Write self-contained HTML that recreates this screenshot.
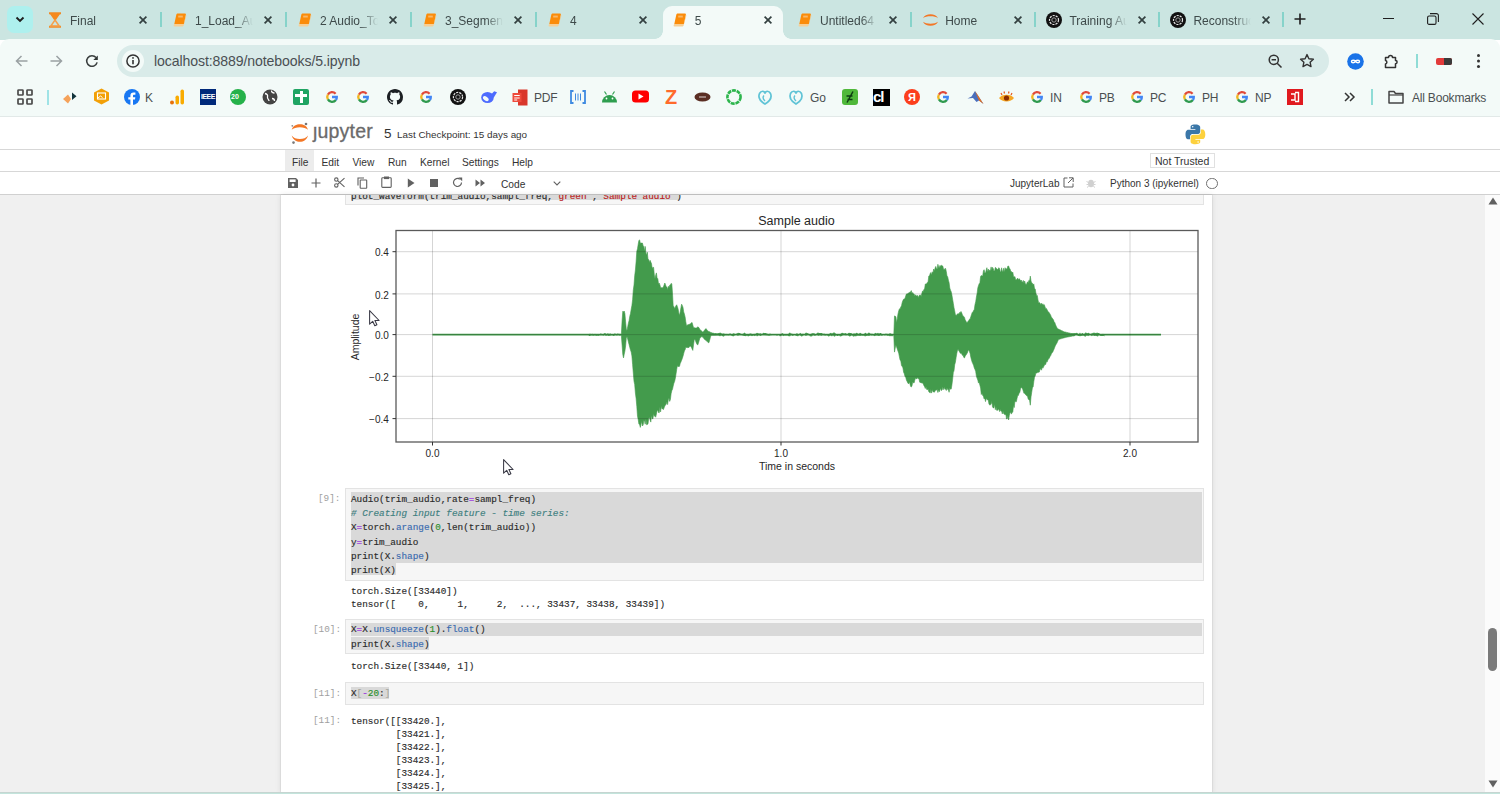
<!DOCTYPE html>
<html><head><meta charset="utf-8">
<style>
*{box-sizing:border-box}
html,body{margin:0;padding:0}
body{width:1500px;height:794px;overflow:hidden;position:relative;background:#fff;font-family:"Liberation Sans",sans-serif;color:#202124}
.abs{position:absolute}
svg{position:absolute;overflow:visible}
.sep{position:absolute;top:11.5px;width:2px;height:15px;background:#86d3ca}
.tabtxt{position:absolute;top:14px;font-size:12px;line-height:14px;color:#3e4a4a;white-space:nowrap;overflow:hidden;-webkit-mask-image:linear-gradient(90deg,#000 70%,transparent 100%)}
.bm{position:absolute;top:90.5px;font-size:12px;line-height:14px;color:#4a4f51;letter-spacing:-0.2px;white-space:nowrap}
.hline{position:absolute;left:0;width:1500px;height:1px;background:#cfcfcf}
.mono{font-family:"Liberation Mono",monospace}
.menu{position:absolute;top:155.5px;font-size:10.2px;line-height:13px;color:#333}
</style></head><body>

<div class="abs" style="left:0;top:0;width:1500px;height:40px;background:#cbe5e1"></div>
<div class="abs" style="left:0;top:39px;width:1500px;height:78px;background:#f3faf8;border-radius:9px 9px 0 0"></div>
<div class="abs" style="left:0;top:116px;width:1500px;height:1px;background:#e2e9e8"></div>
<div class="abs" style="left:7px;top:6px;width:26px;height:27px;border-radius:7px;background:#aef0ee"></div>
<svg style="left:15px;top:16px" width="10" height="8" viewBox="0 0 10 8"><path d="M1.5 1.5l3.5 3.5L8.5 1.5" fill="none" stroke="#1f1f1f" stroke-width="1.9"/></svg>
<svg style="left:48px;top:12px" width="14" height="16" viewBox="0 0 14 16"><path d="M1 1.2h12M1 14.8h12" stroke="#f08a24" stroke-width="2"/><path d="M2.8 2L11.2 2L7 8Z" fill="#f58a1f" stroke="#f58a1f" stroke-width="1.4"/><path d="M7 8L11.2 14H2.8Z" fill="none" stroke="#f5a04a" stroke-width="1.5"/></svg>
<div class="tabtxt" style="left:70px;width:58px">Final</div>
<svg style="left:138px;top:15px" width="10" height="10" viewBox="0 0 10 10"><path d="M1.6 1.6l6.8 6.8M8.4 1.6l-6.8 6.8" stroke="#334040" stroke-width="1.7"/></svg>
<div class="sep" style="left:160px"></div>
<svg style="left:173px;top:13px" width="14" height="14" viewBox="0 0 14 14"><path d="M4.300 0.500h7.600a1 1 0 0 1 1 1.200l-2 9.300H1.300l2-9.300a1.500 1.500 0 0 1 1-1.200z" fill="#fb8c0a"/><path d="M1.300 11h9.600l-.3 1.600a1 1 0 0 1-1 .8H1.600a1 1 0 0 1-1-1.200z" fill="#f7cf95"/><path d="M12.900 1.700l-2 9.300-.3 1.600 2.700-9.800z" fill="#f9c583"/><rect x="5.200" y="2.600" width="4.600" height="1.900" fill="#f8b86a"/></svg>
<div class="tabtxt" style="left:195px;width:58px">1_Load_Audio</div>
<svg style="left:263px;top:15px" width="10" height="10" viewBox="0 0 10 10"><path d="M1.6 1.6l6.8 6.8M8.4 1.6l-6.8 6.8" stroke="#334040" stroke-width="1.7"/></svg>
<div class="sep" style="left:285px"></div>
<svg style="left:298px;top:13px" width="14" height="14" viewBox="0 0 14 14"><path d="M4.300 0.500h7.600a1 1 0 0 1 1 1.200l-2 9.300H1.300l2-9.300a1.500 1.500 0 0 1 1-1.200z" fill="#fb8c0a"/><path d="M1.300 11h9.600l-.3 1.600a1 1 0 0 1-1 .8H1.600a1 1 0 0 1-1-1.200z" fill="#f7cf95"/><path d="M12.900 1.700l-2 9.300-.3 1.600 2.700-9.800z" fill="#f9c583"/><rect x="5.200" y="2.600" width="4.600" height="1.900" fill="#f8b86a"/></svg>
<div class="tabtxt" style="left:320px;width:58px">2 Audio_To</div>
<svg style="left:388px;top:15px" width="10" height="10" viewBox="0 0 10 10"><path d="M1.6 1.6l6.8 6.8M8.4 1.6l-6.8 6.8" stroke="#334040" stroke-width="1.7"/></svg>
<div class="sep" style="left:410px"></div>
<svg style="left:423px;top:13px" width="14" height="14" viewBox="0 0 14 14"><path d="M4.300 0.500h7.600a1 1 0 0 1 1 1.200l-2 9.300H1.300l2-9.300a1.500 1.500 0 0 1 1-1.200z" fill="#fb8c0a"/><path d="M1.300 11h9.600l-.3 1.600a1 1 0 0 1-1 .8H1.600a1 1 0 0 1-1-1.200z" fill="#f7cf95"/><path d="M12.900 1.700l-2 9.300-.3 1.600 2.700-9.800z" fill="#f9c583"/><rect x="5.200" y="2.600" width="4.600" height="1.900" fill="#f8b86a"/></svg>
<div class="tabtxt" style="left:445px;width:58px">3_Segmentation</div>
<svg style="left:513px;top:15px" width="10" height="10" viewBox="0 0 10 10"><path d="M1.6 1.6l6.8 6.8M8.4 1.6l-6.8 6.8" stroke="#334040" stroke-width="1.7"/></svg>
<div class="sep" style="left:535px"></div>
<svg style="left:548px;top:13px" width="14" height="14" viewBox="0 0 14 14"><path d="M4.300 0.500h7.600a1 1 0 0 1 1 1.200l-2 9.300H1.300l2-9.300a1.500 1.500 0 0 1 1-1.200z" fill="#fb8c0a"/><path d="M1.300 11h9.600l-.3 1.600a1 1 0 0 1-1 .8H1.600a1 1 0 0 1-1-1.200z" fill="#f7cf95"/><path d="M12.900 1.700l-2 9.300-.3 1.600 2.700-9.800z" fill="#f9c583"/><rect x="5.200" y="2.600" width="4.600" height="1.900" fill="#f8b86a"/></svg>
<div class="tabtxt" style="left:570px;width:58px">4</div>
<svg style="left:638px;top:15px" width="10" height="10" viewBox="0 0 10 10"><path d="M1.6 1.6l6.8 6.8M8.4 1.6l-6.8 6.8" stroke="#334040" stroke-width="1.7"/></svg>
<div class="abs" style="left:663px;top:6px;width:120px;height:34px;background:#f3faf8;border-radius:9px 9px 0 0"></div>
<div class="abs" style="left:655px;top:31px;width:8px;height:8px;background:radial-gradient(circle at 0 0,#cbe5e1 7.5px,#f3faf8 8px)"></div>
<div class="abs" style="left:783px;top:31px;width:8px;height:8px;background:radial-gradient(circle at 100% 0,#cbe5e1 7.5px,#f3faf8 8px)"></div>
<svg style="left:672.7px;top:13px" width="14" height="14" viewBox="0 0 14 14"><path d="M4.300 0.500h7.600a1 1 0 0 1 1 1.200l-2 9.300H1.300l2-9.300a1.500 1.500 0 0 1 1-1.200z" fill="#fb8c0a"/><path d="M1.300 11h9.600l-.3 1.600a1 1 0 0 1-1 .8H1.600a1 1 0 0 1-1-1.200z" fill="#f7cf95"/><path d="M12.900 1.700l-2 9.300-.3 1.600 2.700-9.800z" fill="#f9c583"/><rect x="5.200" y="2.600" width="4.600" height="1.900" fill="#f8b86a"/></svg>
<div class="tabtxt" style="left:694.7px;width:58px">5</div>
<svg style="left:762.7px;top:15px" width="10" height="10" viewBox="0 0 10 10"><path d="M1.6 1.6l6.8 6.8M8.4 1.6l-6.8 6.8" stroke="#334040" stroke-width="1.7"/></svg>
<svg style="left:798px;top:13px" width="14" height="14" viewBox="0 0 14 14"><path d="M4.300 0.500h7.600a1 1 0 0 1 1 1.200l-2 9.300H1.300l2-9.300a1.500 1.500 0 0 1 1-1.200z" fill="#fb8c0a"/><path d="M1.300 11h9.600l-.3 1.600a1 1 0 0 1-1 .8H1.600a1 1 0 0 1-1-1.200z" fill="#f7cf95"/><path d="M12.900 1.700l-2 9.300-.3 1.600 2.700-9.800z" fill="#f9c583"/><rect x="5.200" y="2.600" width="4.600" height="1.900" fill="#f8b86a"/></svg>
<div class="tabtxt" style="left:820px;width:58px">Untitled64</div>
<svg style="left:888px;top:15px" width="10" height="10" viewBox="0 0 10 10"><path d="M1.6 1.6l6.8 6.8M8.4 1.6l-6.8 6.8" stroke="#334040" stroke-width="1.7"/></svg>
<div class="sep" style="left:910.2px"></div>
<svg style="left:922.2px;top:12px" width="17" height="16" viewBox="0 0 17 16"><path d="M1 6.200C3 0.800 14 0.800 16 6.200C13 3.600 4 3.600 1 6.200Z" fill="#f37726"/><path d="M1 9.800C3 15.200 14 15.200 16 9.800C13 12.400 4 12.400 1 9.800Z" fill="#f37726"/></svg>
<div class="tabtxt" style="left:945.2px;width:58px">Home</div>
<svg style="left:1013.2px;top:15px" width="10" height="10" viewBox="0 0 10 10"><path d="M1.6 1.6l6.8 6.8M8.4 1.6l-6.8 6.8" stroke="#334040" stroke-width="1.7"/></svg>
<div class="sep" style="left:1034.4px"></div>
<svg style="left:1046.4px;top:12px" width="16" height="16" viewBox="0 0 16 16"><circle cx="8" cy="8" r="8" fill="#111"/><circle cx="8" cy="8" r="4.5" fill="none" stroke="#e6e6e6" stroke-width="1.2" stroke-dasharray="2.2 1"/><circle cx="8" cy="8" r="2.2" fill="none" stroke="#aaa" stroke-width=".9"/></svg>
<div class="tabtxt" style="left:1069.4px;width:58px">Training Au</div>
<svg style="left:1137.4px;top:15px" width="10" height="10" viewBox="0 0 10 10"><path d="M1.6 1.6l6.8 6.8M8.4 1.6l-6.8 6.8" stroke="#334040" stroke-width="1.7"/></svg>
<div class="sep" style="left:1158.4px"></div>
<svg style="left:1170.4px;top:12px" width="16" height="16" viewBox="0 0 16 16"><circle cx="8" cy="8" r="8" fill="#111"/><circle cx="8" cy="8" r="4.5" fill="none" stroke="#e6e6e6" stroke-width="1.2" stroke-dasharray="2.2 1"/><circle cx="8" cy="8" r="2.2" fill="none" stroke="#aaa" stroke-width=".9"/></svg>
<div class="tabtxt" style="left:1193.4px;width:58px">Reconstruction</div>
<svg style="left:1261.4px;top:15px" width="10" height="10" viewBox="0 0 10 10"><path d="M1.6 1.6l6.8 6.8M8.4 1.6l-6.8 6.8" stroke="#334040" stroke-width="1.7"/></svg>
<div class="sep" style="left:1282.1px"></div>
<svg style="left:1294px;top:13px" width="12" height="12" viewBox="0 0 12 12"><path d="M6 0.5v11M0.5 6h11" stroke="#1f1f1f" stroke-width="1.6"/></svg>
<div class="abs" style="left:1383px;top:18px;width:11px;height:1px;background:#1f1f1f"></div>
<svg style="left:1427px;top:13px" width="12" height="12" viewBox="0 0 12 12"><rect x="0.6" y="3" width="8.4" height="8.4" rx="1.5" fill="none" stroke="#1f1f1f" stroke-width="1.1"/><path d="M3 0.6h6.4a2 2 0 0 1 2 2v6.4" fill="none" stroke="#1f1f1f" stroke-width="1.1"/></svg>
<svg style="left:1472px;top:13px" width="12" height="12" viewBox="0 0 12 12"><path d="M0.5 0.5l11 11M11.5 0.5l-11 11" stroke="#1f1f1f" stroke-width="1.1"/></svg>
<svg style="left:15px;top:55px" width="13" height="12" viewBox="0 0 13 12"><path d="M12.5 6H1.5M6.5 1L1.5 6l5 5" fill="none" stroke="#9aa1a3" stroke-width="1.5"/></svg>
<svg style="left:50px;top:55px" width="13" height="12" viewBox="0 0 13 12"><path d="M0.5 6h11M6.5 1l5 5-5 5" fill="none" stroke="#9aa1a3" stroke-width="1.5"/></svg>
<svg style="left:85px;top:54px" width="14" height="14" viewBox="0 0 14 14"><path d="M11.060 3.590A5.300 5.300 0 1 0 12.120 8.370" fill="none" stroke="#3a3f3f" stroke-width="1.55"/><path d="M8.300 5.900H12.800V1.400z" fill="#2f3434"/></svg>
<div class="abs" style="left:117px;top:45px;width:1212px;height:32px;border-radius:16px;background:#d9ebe9"></div>
<div class="abs" style="left:122px;top:50px;width:22px;height:22px;border-radius:11px;background:#f3faf8"></div>
<svg style="left:126px;top:54px" width="14" height="14" viewBox="0 0 14 14"><circle cx="7" cy="7" r="6.1" fill="none" stroke="#333" stroke-width="1.5"/><path d="M7 6v4.3" stroke="#333" stroke-width="1.6"/><circle cx="7" cy="3.9" r="0.9" fill="#333"/></svg>
<div class="abs" style="left:154px;top:53px;font-size:14.1px;line-height:17px;color:#4a4f53;letter-spacing:-0.1px">localhost:8889/notebooks/5.ipynb</div>
<svg style="left:1268px;top:54px" width="15" height="15" viewBox="0 0 15 15"><circle cx="5.8" cy="5.8" r="4.6" fill="none" stroke="#333" stroke-width="1.5"/><path d="M3.6 5.8h4.4M9.2 9.2l4.3 4.3" stroke="#333" stroke-width="1.5"/></svg>
<svg style="left:1299px;top:53px" width="16" height="16" viewBox="0 0 16 16"><path d="M8 1.6l1.9 4.1 4.5.5-3.3 3 .9 4.4L8 11.4l-4 2.2.9-4.4-3.3-3 4.5-.5z" fill="none" stroke="#333" stroke-width="1.4" stroke-linejoin="round"/></svg>
<svg style="left:1347px;top:53px" width="17" height="17" viewBox="0 0 17 17"><circle cx="8.5" cy="8.5" r="8.3" fill="#1a73e8"/><path d="M8.5 8.5c-1.2-1.6-4-1.6-4 0s2.8 1.6 4 0c1.2-1.6 4-1.6 4 0s-2.8 1.6-4 0" fill="none" stroke="#fff" stroke-width="1.4"/></svg>
<svg style="left:1384px;top:53px" width="16" height="16" viewBox="0 0 16 16"><path d="M1.5 4.5h3a2 2 0 0 1 4 0h3v3a1.6 1.6 0 0 1 0 3.2v3.8h-10v-3.5a1.8 1.8 0 0 0 0-3.5z" fill="none" stroke="#333" stroke-width="1.5" stroke-linejoin="round"/></svg>
<div class="abs" style="left:1416px;top:54px;width:2px;height:14px;background:#8fdcd6"></div>
<div class="abs" style="left:1436px;top:58px;width:16px;height:7px;background:#e23a3a;border-radius:2px"></div><div class="abs" style="left:1444px;top:58px;width:8px;height:7px;background:#3a3a3a;border-radius:0 2px 2px 0"></div>
<div class="abs" style="left:1477px;top:54px;width:3px;height:3px;border-radius:2px;background:#333;box-shadow:0 5.5px 0 #333,0 11px 0 #333"></div>
<svg style="left:17px;top:89px" width="16" height="16" viewBox="0 0 16 16"><g fill="none" stroke="#4a4a4a" stroke-width="1.7"><rect x="1" y="1" width="5" height="5" rx=".6"/><rect x="10" y="1" width="5" height="5" rx=".6"/><rect x="1" y="10" width="5" height="5" rx=".6"/><rect x="10" y="10" width="5" height="5" rx=".6"/></g></svg>
<div class="abs" style="left:47px;top:89.5px;width:2px;height:15px;background:#9fe3e6"></div>
<svg style="left:62px;top:89px" width="16" height="16" viewBox="0 0 16 16"><path d="M1 10L6 5.5 9 10 6 14.500z" fill="#f5a25a"/><path d="M10 3.500l4.500 3.800-4.500 3.700z" fill="#12343b"/></svg>
<svg style="left:93px;top:88px" width="17" height="17" viewBox="0 0 17 17"><path d="M8.5 0.5l7.5 4v8l-7.5 4-7.5-4v-8z" fill="#f2a007"/><rect x="4.5" y="5" width="8" height="6" fill="none" stroke="#fff" stroke-width="1.1"/><path d="M5 10l2.5-2 2 1.5" fill="none" stroke="#fff" stroke-width="1"/></svg>
<svg style="left:124px;top:89px" width="16" height="16" viewBox="0 0 16 16"><circle cx="8" cy="8" r="8" fill="#1877f2"/><path d="M9 16v-5.5h2l.3-2.3H9V6.8c0-.7.2-1.1 1.1-1.1h1.3V3.6c-.3 0-1-.1-1.9-.1-1.900 0-3.100 1.100-3.100 3.200v1.500H4.300v2.300h2.100V16z" fill="#fff"/></svg>
<div class="bm" style="left:145px">K</div>
<svg style="left:169px;top:89px" width="16" height="16" viewBox="0 0 16 16"><circle cx="3" cy="13.5" r="2" fill="#e8710a"/><rect x="6.5" y="6.5" width="3.5" height="9" rx="1.7" fill="#f9ab00"/><rect x="11.5" y="0.5" width="3.5" height="15" rx="1.7" fill="#f9ab00"/></svg>
<div class="abs" style="left:200px;top:89px;width:16px;height:16px;background:#00297a"></div><div class="abs" style="left:201px;top:93px;width:14px;font-size:7px;line-height:8px;color:#fff;font-weight:bold;letter-spacing:-0.5px">IEEE</div>
<div class="abs" style="left:230px;top:89px;width:16px;height:16px;border-radius:50%;background:#25b14a"></div><div class="abs" style="left:231px;top:93px;font-size:7px;line-height:8px;color:#fff;font-weight:bold">20</div>
<svg style="left:262px;top:89px" width="16" height="16" viewBox="0 0 16 16"><circle cx="8" cy="8" r="7.5" fill="#444"/><path d="M3 4.5c2 .5 3 1.5 2.5 3.5s1.5 2 1.5 4M9.5 1.5c0 2 1.5 2.5 3 2.5M10 9.5c1.5 0 2.5 1 2.5 2.5" stroke="#fff" stroke-width="1.3" fill="none"/></svg>
<div class="abs" style="left:293.0px;top:89.0px;width:16px;height:16px;border-radius:2px;background:#1fa463"></div><div class="abs" style="left:299.5px;top:91px;width:3px;height:12px;background:#fff"></div><div class="abs" style="left:295px;top:94px;width:12px;height:3px;background:#fff"></div>
<svg style="left:326px;top:91px" width="12" height="12" viewBox="0 0 12 12"><g fill="none" stroke-width="2.3"><path d="M9.6 2.7A4.800 4.800 0 0 0 1.900 3.600" stroke="#e04a3a"/><path d="M1.900 3.600A4.800 4.800 0 0 0 1.900 8.400" stroke="#f2b51e"/><path d="M1.900 8.400A4.800 4.800 0 0 0 9.900 9" stroke="#2f9a4f"/><path d="M9.900 9A4.800 4.800 0 0 0 10.800 6H6" stroke="#4285f4"/></g></svg>
<svg style="left:357px;top:91px" width="12" height="12" viewBox="0 0 12 12"><g fill="none" stroke-width="2.3"><path d="M9.6 2.7A4.800 4.800 0 0 0 1.900 3.600" stroke="#e04a3a"/><path d="M1.900 3.600A4.800 4.800 0 0 0 1.900 8.400" stroke="#f2b51e"/><path d="M1.900 8.400A4.800 4.800 0 0 0 9.900 9" stroke="#2f9a4f"/><path d="M9.900 9A4.800 4.800 0 0 0 10.800 6H6" stroke="#4285f4"/></g></svg>
<svg style="left:387px;top:89px" width="16" height="16" viewBox="0 0 16 16"><path fill="#1b1f23" d="M8 0C3.58 0 0 3.58 0 8c0 3.54 2.29 6.53 5.47 7.59.4.07.55-.17.55-.38 0-.19-.01-.82-.01-1.49-2.01.37-2.53-.49-2.69-.94-.09-.23-.48-.94-.82-1.13-.28-.15-.68-.52-.01-.53.63-.01 1.08.58 1.23.82.72 1.21 1.87.87 2.33.66.07-.52.28-.87.51-1.07-1.78-.2-3.640-.89-3.640-3.950 0-.87.31-1.59.82-2.15-.08-.2-.36-1.02.08-2.12 0 0 .67-.21 2.2.82.64-.18 1.32-.27 2-.27.68 0 1.36.09 2 .27 1.53-1.04 2.2-.82 2.2-.82.44 1.1.16 1.92.08 2.12.51.56.82 1.27.82 2.15 0 3.07-1.87 3.75-3.65 3.95.29.25.54.73.54 1.48 0 1.07-.01 1.93-.01 2.2 0 .21.15.46.55.38A8.013 8.013 0 0016 8c0-4.42-3.58-8-8-8z"/></svg>
<svg style="left:420px;top:91px" width="12" height="12" viewBox="0 0 12 12"><g fill="none" stroke-width="2.3"><path d="M9.6 2.7A4.800 4.800 0 0 0 1.900 3.600" stroke="#e04a3a"/><path d="M1.900 3.600A4.800 4.800 0 0 0 1.900 8.400" stroke="#f2b51e"/><path d="M1.900 8.400A4.800 4.800 0 0 0 9.900 9" stroke="#2f9a4f"/><path d="M9.900 9A4.800 4.800 0 0 0 10.800 6H6" stroke="#4285f4"/></g></svg>
<svg style="left:450px;top:89px" width="16" height="16" viewBox="0 0 16 16"><circle cx="8" cy="8" r="8" fill="#111"/><circle cx="8" cy="8" r="4.6" fill="none" stroke="#e6e6e6" stroke-width="1.2" stroke-dasharray="2.2 1"/><circle cx="8" cy="8" r="2.2" fill="none" stroke="#aaa" stroke-width=".9"/></svg>
<svg style="left:480px;top:90px" width="18" height="14" viewBox="0 0 18 14"><ellipse cx="7.500" cy="7.500" rx="6.300" ry="5.600" fill="#4d6bfe"/><path d="M10.500 5L14.200 1.200 17 2.300 13.800 7.500z" fill="#4d6bfe"/><ellipse cx="5.800" cy="8.600" rx="3.200" ry="1.900" transform="rotate(35 5.800 8.600)" fill="#f3faf8"/></svg>
<svg style="left:512px;top:89px" width="16" height="17" viewBox="0 0 16 17"><path d="M6 0.5h9.5v16H6z" fill="#d9372b"/><path d="M0.5 4h9v9h-9z" fill="#ee4b3c"/><path d="M2.2 6.5h5.5M2.2 9h5.500M2.200 11h3" stroke="#fff" stroke-width="1"/></svg>
<div class="bm" style="left:534px">PDF</div>
<svg style="left:570px;top:90px" width="16" height="14" viewBox="0 0 16 14"><path d="M3.5 1H1v12h2.5M12.5 1H15v12h-2.5" fill="none" stroke="#3f8ae0" stroke-width="1.8"/><path d="M5.500 3.500v7M8 3.500v7M10.500 3.500v7" stroke="#3f8ae0" stroke-width="1"/></svg>
<svg style="left:601px;top:90px" width="17" height="13" viewBox="0 0 17 13"><path d="M1 12.5a7.5 7.5 0 0 1 15 0z" fill="#2e9e4f" /><path d="M3.5 1.5l2 3M13.5 1.5l-2 3" stroke="#2e9e4f" stroke-width="1.2"/><circle cx="5.5" cy="8.5" r=".9" fill="#fff"/><circle cx="11.5" cy="8.5" r=".9" fill="#fff"/></svg>
<svg style="left:632px;top:90px" width="17" height="13" viewBox="0 0 17 13"><rect x="0" y="0.5" width="17" height="12" rx="3.5" fill="#f00"/><path d="M6.5 3.5l5 3-5 3z" fill="#fff"/></svg>
<div class="abs" style="left:665px;top:86px;font-size:20px;line-height:22px;font-weight:bold;color:#ff6a2b">Z</div>
<svg style="left:694px;top:92px" width="17" height="10" viewBox="0 0 17 10"><ellipse cx="8.5" cy="5" rx="8" ry="4.6" fill="#5a2e23"/><path d="M5 5h7" stroke="#fff" stroke-width=".8"/></svg>
<svg style="left:726px;top:89px" width="16" height="16" viewBox="0 0 16 16"><circle cx="8" cy="8" r="6.6" fill="none" stroke="#2cb54c" stroke-width="2.6" stroke-dasharray="4 .8"/></svg>
<svg style="left:757px;top:89px" width="16" height="16" viewBox="0 0 16 16"><path d="M8 15C3 12 1 8 2.5 4.500 4 1.500 7.500 1.500 8 4.500 8.500 1.500 12 1.500 13.500 4.500 15 8 13 12 8 15z" fill="none" stroke="#5fc3d6" stroke-width="1.7"/><path d="M8 12c-2-2-2.500-4-1-5.500" fill="none" stroke="#5fc3d6" stroke-width="1.4"/></svg>
<svg style="left:788px;top:89px" width="16" height="16" viewBox="0 0 16 16"><path d="M8 15C3 12 1 8 2.5 4.500 4 1.500 7.500 1.500 8 4.500 8.500 1.500 12 1.500 13.500 4.500 15 8 13 12 8 15z" fill="none" stroke="#5fc3d6" stroke-width="1.7"/><path d="M8 12c-2-2-2.500-4-1-5.500" fill="none" stroke="#5fc3d6" stroke-width="1.4"/></svg>
<div class="bm" style="left:810px">Go</div>
<div class="abs" style="left:842.0px;top:89.0px;width:16px;height:16px;border-radius:3px;background:#4fb83a"></div><svg style="left:843px;top:90px" width="14" height="14" viewBox="0 0 14 14"><path d="M4 12.5l6-11M3.500 6h6M4.500 9.500h5" stroke="#0d3b12" stroke-width="1.5" fill="none"/></svg>
<div class="abs" style="left:872.5px;top:88.5px;width:17px;height:17px;border-radius:0px;background:#000"></div><div class="abs" style="left:873px;top:88px;font-size:15px;line-height:17px;font-weight:bold;color:#fff;letter-spacing:-1px">cl</div>
<div class="abs" style="left:904px;top:89px;width:16px;height:16px;border-radius:50%;background:#fc3f1d"></div><div class="abs" style="left:908px;top:91px;font-size:11px;line-height:12px;font-weight:bold;color:#fff">Я</div>
<svg style="left:937px;top:91px" width="12" height="12" viewBox="0 0 12 12"><g fill="none" stroke-width="2.3"><path d="M9.6 2.7A4.800 4.800 0 0 0 1.900 3.600" stroke="#e04a3a"/><path d="M1.900 3.600A4.800 4.800 0 0 0 1.900 8.400" stroke="#f2b51e"/><path d="M1.900 8.400A4.800 4.800 0 0 0 9.900 9" stroke="#2f9a4f"/><path d="M9.900 9A4.800 4.800 0 0 0 10.800 6H6" stroke="#4285f4"/></g></svg>
<svg style="left:967px;top:89px" width="17" height="16" viewBox="0 0 17 16"><path d="M0.5 9.5l4-2L8 2l3 4.5 5.500 8.500-4.500-3.500-2.500 1.500-3.500-4z" fill="#4a6fbc"/><path d="M8 2l3 4.5 5.500 8.500-4.500-3.500z" fill="#e56e1f"/></svg>
<svg style="left:998px;top:90px" width="17" height="14" viewBox="0 0 17 14"><path d="M1 8c3-4.500 12-4.500 15 0-3 4.500-12 4.500-15 0z" fill="#f5a623"/><circle cx="8.5" cy="8" r="2.6" fill="#8b2c00"/><path d="M3 3l1 2M6 1.500l.5 2M11 1.500l-.5 2M14 3l-1 2" stroke="#e6561b" stroke-width="1.2"/></svg>
<svg style="left:1031px;top:91px" width="12" height="12" viewBox="0 0 12 12"><g fill="none" stroke-width="2.3"><path d="M9.6 2.7A4.800 4.800 0 0 0 1.900 3.600" stroke="#e04a3a"/><path d="M1.900 3.600A4.800 4.800 0 0 0 1.900 8.400" stroke="#f2b51e"/><path d="M1.900 8.400A4.800 4.800 0 0 0 9.900 9" stroke="#2f9a4f"/><path d="M9.900 9A4.800 4.800 0 0 0 10.800 6H6" stroke="#4285f4"/></g></svg>
<div class="bm" style="left:1050px">IN</div>
<svg style="left:1080px;top:91px" width="12" height="12" viewBox="0 0 12 12"><g fill="none" stroke-width="2.3"><path d="M9.6 2.7A4.800 4.800 0 0 0 1.900 3.600" stroke="#e04a3a"/><path d="M1.900 3.600A4.800 4.800 0 0 0 1.900 8.400" stroke="#f2b51e"/><path d="M1.900 8.400A4.800 4.800 0 0 0 9.900 9" stroke="#2f9a4f"/><path d="M9.900 9A4.800 4.800 0 0 0 10.800 6H6" stroke="#4285f4"/></g></svg>
<div class="bm" style="left:1099px">PB</div>
<svg style="left:1131px;top:91px" width="12" height="12" viewBox="0 0 12 12"><g fill="none" stroke-width="2.3"><path d="M9.6 2.7A4.800 4.800 0 0 0 1.900 3.600" stroke="#e04a3a"/><path d="M1.900 3.600A4.800 4.800 0 0 0 1.900 8.400" stroke="#f2b51e"/><path d="M1.900 8.400A4.800 4.800 0 0 0 9.900 9" stroke="#2f9a4f"/><path d="M9.900 9A4.800 4.800 0 0 0 10.800 6H6" stroke="#4285f4"/></g></svg>
<div class="bm" style="left:1150px">PC</div>
<svg style="left:1183px;top:91px" width="12" height="12" viewBox="0 0 12 12"><g fill="none" stroke-width="2.3"><path d="M9.6 2.7A4.800 4.800 0 0 0 1.900 3.600" stroke="#e04a3a"/><path d="M1.900 3.600A4.800 4.800 0 0 0 1.900 8.400" stroke="#f2b51e"/><path d="M1.900 8.400A4.800 4.800 0 0 0 9.900 9" stroke="#2f9a4f"/><path d="M9.900 9A4.800 4.800 0 0 0 10.800 6H6" stroke="#4285f4"/></g></svg>
<div class="bm" style="left:1202px">PH</div>
<svg style="left:1236px;top:91px" width="12" height="12" viewBox="0 0 12 12"><g fill="none" stroke-width="2.3"><path d="M9.6 2.7A4.800 4.800 0 0 0 1.900 3.600" stroke="#e04a3a"/><path d="M1.900 3.600A4.800 4.800 0 0 0 1.900 8.400" stroke="#f2b51e"/><path d="M1.900 8.400A4.800 4.800 0 0 0 9.900 9" stroke="#2f9a4f"/><path d="M9.900 9A4.800 4.800 0 0 0 10.800 6H6" stroke="#4285f4"/></g></svg>
<div class="bm" style="left:1255px">NP</div>
<svg style="left:1287px;top:89px" width="16" height="16" viewBox="0 0 16 16"><rect width="16" height="16" fill="#e0191f"/><path d="M4 5h4v6H4M8 3.500h3.500v9H8" fill="none" stroke="#fff" stroke-width="1.4"/></svg>
<svg style="left:1344px;top:92px" width="11" height="10" viewBox="0 0 11 10"><path d="M1 1l4 4-4 4M6 1l4 4-4 4" fill="none" stroke="#333" stroke-width="1.5"/></svg>
<div class="abs" style="left:1371px;top:89px;width:2px;height:16px;background:#8fdcd6"></div>
<svg style="left:1388px;top:90px" width="16" height="14" viewBox="0 0 16 14"><path d="M1 1.500h5l1.500 2H15v9.500H1z" fill="none" stroke="#444" stroke-width="1.5" stroke-linejoin="round"/><path d="M1 5h14" stroke="#444" stroke-width="1.2"/></svg>
<div class="bm" style="left:1412px">All Bookmarks</div>
<svg style="left:290px;top:122px" width="20" height="22" viewBox="0 0 20 22"><path d="M1.700 7.700C4 0.500 16 0.500 18 7.700C15 4.300 4.700 4.300 1.700 7.700Z" fill="#f37726"/><path d="M1.700 13.400C4 21.800 16 21.800 18 13.400C15 18.100 4.700 18.100 1.700 13.400Z" fill="#f37726"/><circle cx="16" cy="2" r="1.3" fill="#767677"/><circle cx="2.300" cy="3.800" r=".9" fill="#8a8a8a"/><circle cx="3.500" cy="20.600" r="1.3" fill="#7a7a7a"/></svg>
<div class="abs" style="left:313px;top:119.6px;font-size:19.5px;line-height:22px;color:#6a6a6a;letter-spacing:0.2px;-webkit-text-stroke:0.3px #6a6a6a">ȷupyter</div>
<div class="abs" style="left:384px;top:126px;font-size:13.5px;line-height:15px;color:#333">5</div>
<div class="abs" style="left:397px;top:129px;font-size:9.9px;line-height:12px;color:#333">Last Checkpoint: 15 days ago</div>
<svg style="left:1185px;top:124px" width="21" height="21" viewBox="0 0 21 21"><path d="M10.3 0.5c-5 0-4.700 2.200-4.700 2.200v2.300h4.800v.7H3.700S0.500 5.300 0.500 10.400s2.800 4.900 2.800 4.900h1.700v-2.400s-.1-2.800 2.800-2.800h4.700s2.700 0 2.700-2.600V3.300S15.600 0.500 10.300 0.500zM7.700 2c.5 0 .8.400.8.800s-.4.800-.8.800-.8-.4-.8-.8.300-.8.800-.8z" fill="#3b77a8"/><path d="M10.500 20.300c5 0 4.700-2.200 4.700-2.200v-2.300h-4.800v-.7h6.700s3.200.400 3.200-4.700-2.800-4.900-2.800-4.900h-1.700v2.400s.1 2.800-2.800 2.800H8.300s-2.700 0-2.700 2.600v4.200s-.400 2.800 4.900 2.800zm2.600-1.500c-.5 0-.8-.4-.8-.8s.4-.8.8-.8.8.4.8.8-.3.8-.8.8z" fill="#fdd13d"/></svg>
<div class="hline" style="top:149px;background:#d7d7d7"></div>
<div class="abs" style="left:285px;top:150px;width:29px;height:21px;background:#ececec"></div>
<div class="menu" style="left:292px">File</div>
<div class="menu" style="left:321.5px">Edit</div>
<div class="menu" style="left:352.5px">View</div>
<div class="menu" style="left:388px">Run</div>
<div class="menu" style="left:420px">Kernel</div>
<div class="menu" style="left:462px">Settings</div>
<div class="menu" style="left:512px">Help</div>
<div class="abs" style="left:1150px;top:153px;width:65px;height:15px;border:1px solid #e0e0e0;background:#fff"></div>
<div class="abs" style="left:1155px;top:154.5px;font-size:10.5px;line-height:12px;color:#333">Not Trusted</div>
<div class="hline" style="top:171px;background:#d7d7d7"></div>
<svg style="left:288px;top:178px" width="10" height="10" viewBox="0 0 10 10"><path d="M0 0h8l2 2v8H0z" fill="#616161"/><rect x="1.6" y="1.4" width="6" height="2.6" fill="#fff"/><circle cx="5" cy="7" r="1.4" fill="#fff"/></svg>
<svg style="left:311px;top:178px" width="10" height="10" viewBox="0 0 10 10"><path d="M5 0.5v9M0.5 5h9" stroke="#616161" stroke-width="1.2"/></svg>
<svg style="left:334px;top:177px" width="11" height="11" viewBox="0 0 11 11"><circle cx="2.3" cy="2.6" r="1.7" fill="none" stroke="#616161" stroke-width="1.1"/><circle cx="2.3" cy="8.4" r="1.7" fill="none" stroke="#616161" stroke-width="1.1"/><path d="M3.600 3.600L10.500 9.800M3.600 7.400L10.500 1.200" stroke="#616161" stroke-width="1.1"/></svg>
<svg style="left:357px;top:177px" width="11" height="12" viewBox="0 0 11 12"><path d="M1 8.5V1h6" fill="none" stroke="#616161" stroke-width="1.1"/><rect x="3.2" y="3" width="6.5" height="8.300" rx=".5" fill="none" stroke="#616161" stroke-width="1.1"/></svg>
<svg style="left:381px;top:176px" width="11" height="12" viewBox="0 0 11 12"><rect x="0.8" y="1.8" width="9.400" height="9.600" rx=".8" fill="none" stroke="#616161" stroke-width="1.1"/><rect x="3" y="0.5" width="5" height="2.600" fill="#616161"/></svg>
<svg style="left:407px;top:178px" width="8" height="10" viewBox="0 0 8 10"><path d="M0.8 0.5L7.500 5L0.800 9.500z" fill="#616161"/></svg>
<div class="abs" style="left:430px;top:179px;width:7.5px;height:7.5px;background:#616161"></div>
<svg style="left:452px;top:177px" width="11" height="11" viewBox="0 0 11 11"><path d="M9.500 5.500A4 4 0 1 1 7.800 2.200" fill="none" stroke="#616161" stroke-width="1.2"/><path d="M6.300 0.400h3.900v3.900z" fill="#616161"/></svg>
<svg style="left:475px;top:179px" width="11" height="8" viewBox="0 0 11 8"><path d="M0.500 0.500L5 4L0.500 7.500zM5.500 0.500L10 4L5.500 7.500z" fill="#616161"/></svg>
<div class="abs" style="left:501px;top:177.5px;font-size:10.2px;line-height:13px;color:#333">Code</div>
<svg style="left:553px;top:181px" width="8" height="5" viewBox="0 0 8 5"><path d="M0.700 0.700L4 4L7.300 0.700" fill="none" stroke="#616161" stroke-width="1.1"/></svg>
<div class="abs" style="left:1010px;top:178px;font-size:10px;line-height:12px;color:#333">JupyterLab</div>
<svg style="left:1063px;top:177px" width="11" height="11" viewBox="0 0 11 11"><path d="M4.500 1H1v9h9V6.500" fill="none" stroke="#616161" stroke-width="1"/><path d="M6 0.800h4.200V5M10 1L5 6" fill="none" stroke="#616161" stroke-width="1"/></svg>
<svg style="left:1086px;top:178px" width="10" height="10" viewBox="0 0 10 10"><ellipse cx="5" cy="5.500" rx="3" ry="3.800" fill="#d0d0d0"/><path d="M0.500 3.500l2 1M9.500 3.500l-2 1M0.500 6.500h2M9.500 6.500h-2M1 9.500l1.800-1.500M9 9.500L7.200 8" stroke="#d0d0d0" stroke-width="1"/></svg>
<div class="abs" style="left:1110px;top:178px;font-size:10px;line-height:12px;color:#333">Python 3 (ipykernel)</div>
<div class="abs" style="left:1206px;top:177.5px;width:11.5px;height:11.5px;border-radius:50%;border:1.2px solid #707070"></div>
<div class="hline" style="top:194px;background:#d0d0d0"></div>
<div class="abs" style="left:0;top:195px;width:1485px;height:599px;background:#f0f0f0"></div>
<div class="abs" style="left:1485px;top:195px;width:15px;height:599px;background:#fbfbfb"></div>
<div class="abs" style="left:281px;top:195px;width:931px;height:599px;background:#fff;box-shadow:0 0 1px rgba(0,0,0,.25),0 0 6px rgba(0,0,0,.1)"></div>
<svg style="left:1488px;top:197px" width="10" height="8" viewBox="0 0 10 8"><path d="M0.5 7.5L5 0.5L9.5 7.5z" fill="#606060"/></svg>
<svg style="left:1488px;top:780px" width="10" height="8" viewBox="0 0 10 8"><path d="M0.5 0.5L5 7.5L9.5 0.5z" fill="#606060"/></svg>
<div class="abs" style="left:1488px;top:628px;width:9px;height:43px;border-radius:4.5px;background:#7a7a7a"></div>
<div class="abs" style="left:0;top:195px;width:1485px;height:599px;overflow:hidden"><div class="abs" style="left:0;top:-195px;width:1500px;height:794px">
<div class="abs" style="left:345px;top:160px;width:859px;height:45px;background:#f6f6f6;border:1px solid #e3e3e3"></div>
<div class="abs" style="left:351px;top:186px;width:329px;height:13.699999999999989px;background:#d9d9d9"></div>
<div class="abs" style="left:351px;top:189.5px;line-height:14.2px;font-family:'Liberation Mono',monospace;font-size:9.36px;color:#2b2b2b;white-space:pre;-webkit-text-stroke:0.15px currentColor">plot_waveform(trim_audio,sampl_freq,<span style="color:#ba2121">'green'</span>,<span style="color:#ba2121">'Sample audio'</span>)</div>
<svg style="left:281px;top:205px" width="931px" height="280px" viewBox="281 205 931 280"><line x1="432.5" y1="334.6" x2="1161" y2="334.6" stroke="#439b4c" stroke-width="1.6"/><path d="M588.0 334.1 L589.0 334.4 L590.0 333.6 L591.0 334.5 L592.0 333.7 L593.0 334.0 L594.0 334.5 L595.0 333.8 L596.0 334.5 L597.0 333.9 L598.0 334.5 L599.0 334.5 L600.0 333.9 L601.0 333.3 L602.0 334.4 L603.0 334.2 L604.0 333.6 L605.0 333.1 L606.0 333.7 L607.0 334.0 L608.0 333.0 L609.0 334.5 L610.0 333.2 L611.0 334.1 L612.0 334.4 L613.0 334.4 L614.0 334.1 L615.0 333.3 L616.0 334.3 L617.0 333.7 L618.0 333.6 L619.0 334.0 L620.0 333.7 L621.0 334.5 L622.0 334.7 L621.0 334.9 L620.0 335.7 L619.0 335.3 L618.0 335.1 L617.0 335.5 L616.0 335.3 L615.0 335.1 L614.0 335.9 L613.0 335.7 L612.0 335.0 L611.0 335.5 L610.0 335.4 L609.0 336.0 L608.0 335.8 L607.0 335.1 L606.0 336.2 L605.0 334.8 L604.0 335.3 L603.0 335.8 L602.0 334.8 L601.0 335.4 L600.0 334.7 L599.0 335.7 L598.0 335.8 L597.0 335.5 L596.0 336.0 L595.0 335.1 L594.0 335.7 L593.0 335.6 L592.0 335.5 L591.0 335.3 L590.0 335.9 L589.0 336.1Z M715.0 333.7 L716.0 333.3 L717.0 334.5 L718.0 333.2 L719.0 333.3 L720.0 332.6 L721.0 333.0 L722.0 334.0 L723.0 333.8 L724.0 333.3 L725.0 334.6 L726.0 333.7 L727.0 334.3 L728.0 334.4 L729.0 334.5 L730.0 333.1 L731.0 334.3 L732.0 334.1 L733.0 333.8 L734.0 332.9 L735.0 334.4 L736.0 333.7 L737.0 333.5 L738.0 332.8 L739.0 333.0 L740.0 332.9 L741.0 334.0 L742.0 333.8 L743.0 333.9 L744.0 332.8 L745.0 332.7 L746.0 334.3 L747.0 334.2 L748.0 334.1 L749.0 334.1 L750.0 333.6 L751.0 333.4 L752.0 334.1 L753.0 334.6 L754.0 333.8 L755.0 333.9 L756.0 333.5 L757.0 332.7 L758.0 333.2 L759.0 333.6 L760.0 333.4 L761.0 333.2 L762.0 334.5 L763.0 332.8 L764.0 333.0 L765.0 332.9 L766.0 333.0 L767.0 333.8 L768.0 333.8 L769.0 334.4 L770.0 333.3 L771.0 334.5 L772.0 334.5 L773.0 334.2 L774.0 334.3 L775.0 333.9 L776.0 334.5 L777.0 334.6 L778.0 334.3 L779.0 334.4 L780.0 333.9 L781.0 334.5 L782.0 332.9 L783.0 333.4 L784.0 334.3 L785.0 334.1 L786.0 333.9 L787.0 333.9 L788.0 334.4 L789.0 332.9 L790.0 332.6 L791.0 333.7 L792.0 333.6 L793.0 334.4 L794.0 334.4 L795.0 333.9 L796.0 334.1 L797.0 332.9 L798.0 334.3 L799.0 334.6 L800.0 332.7 L801.0 333.5 L802.0 334.3 L803.0 333.5 L804.0 334.5 L805.0 333.5 L806.0 332.6 L807.0 332.9 L808.0 333.2 L809.0 334.1 L810.0 333.9 L811.0 334.3 L812.0 333.1 L813.0 333.5 L814.0 333.0 L815.0 333.9 L816.0 334.2 L817.0 333.0 L818.0 332.6 L819.0 332.9 L820.0 333.0 L821.0 333.0 L822.0 333.1 L823.0 334.1 L824.0 333.6 L825.0 333.9 L826.0 334.5 L827.0 334.5 L828.0 334.0 L829.0 334.1 L830.0 333.2 L831.0 332.7 L832.0 333.7 L833.0 332.7 L834.0 332.6 L835.0 332.7 L836.0 333.9 L837.0 334.2 L838.0 334.1 L839.0 334.2 L840.0 334.2 L841.0 333.4 L842.0 332.8 L843.0 332.9 L844.0 333.6 L845.0 333.3 L846.0 333.0 L847.0 334.4 L848.0 333.3 L849.0 332.8 L850.0 333.0 L851.0 333.1 L852.0 333.6 L853.0 334.2 L854.0 333.0 L855.0 333.9 L856.0 333.0 L857.0 332.7 L858.0 333.8 L859.0 333.8 L860.0 332.7 L861.0 333.2 L862.0 334.3 L863.0 334.3 L864.0 334.3 L865.0 332.8 L866.0 333.0 L867.0 334.3 L868.0 332.9 L869.0 332.6 L870.0 333.3 L871.0 333.9 L872.0 333.5 L873.0 334.3 L874.0 334.6 L875.0 332.7 L876.0 333.3 L877.0 333.5 L878.0 332.7 L879.0 333.7 L880.0 332.9 L881.0 332.9 L882.0 334.2 L883.0 334.1 L884.0 334.0 L885.0 334.1 L886.0 333.4 L887.0 334.1 L888.0 333.8 L889.0 334.3 L890.0 332.8 L891.0 333.9 L892.0 333.7 L893.0 335.8 L892.0 336.4 L891.0 335.4 L890.0 336.4 L889.0 335.6 L888.0 335.7 L887.0 335.6 L886.0 334.6 L885.0 335.5 L884.0 335.0 L883.0 334.6 L882.0 336.2 L881.0 334.9 L880.0 335.5 L879.0 336.1 L878.0 335.7 L877.0 335.3 L876.0 335.6 L875.0 335.7 L874.0 336.2 L873.0 334.8 L872.0 335.7 L871.0 335.1 L870.0 335.2 L869.0 336.1 L868.0 335.6 L867.0 335.7 L866.0 336.1 L865.0 336.4 L864.0 335.5 L863.0 335.8 L862.0 335.6 L861.0 335.6 L860.0 336.0 L859.0 335.5 L858.0 335.7 L857.0 335.6 L856.0 336.5 L855.0 336.0 L854.0 336.4 L853.0 336.5 L852.0 335.1 L851.0 335.7 L850.0 336.5 L849.0 336.3 L848.0 334.9 L847.0 334.8 L846.0 335.5 L845.0 334.7 L844.0 335.1 L843.0 334.7 L842.0 335.9 L841.0 336.2 L840.0 336.4 L839.0 334.9 L838.0 336.0 L837.0 335.9 L836.0 334.9 L835.0 336.4 L834.0 336.5 L833.0 335.0 L832.0 336.5 L831.0 335.4 L830.0 335.6 L829.0 336.6 L828.0 336.3 L827.0 334.9 L826.0 335.5 L825.0 335.6 L824.0 335.3 L823.0 335.0 L822.0 335.2 L821.0 336.0 L820.0 334.6 L819.0 335.7 L818.0 335.5 L817.0 334.6 L816.0 335.3 L815.0 335.8 L814.0 335.6 L813.0 334.7 L812.0 336.6 L811.0 336.2 L810.0 336.5 L809.0 334.8 L808.0 335.1 L807.0 334.7 L806.0 336.2 L805.0 335.1 L804.0 334.9 L803.0 335.4 L802.0 336.4 L801.0 336.2 L800.0 335.1 L799.0 334.9 L798.0 336.4 L797.0 335.7 L796.0 336.0 L795.0 334.8 L794.0 334.7 L793.0 336.0 L792.0 335.5 L791.0 334.7 L790.0 336.5 L789.0 335.9 L788.0 336.2 L787.0 334.8 L786.0 336.3 L785.0 334.7 L784.0 336.3 L783.0 335.5 L782.0 335.3 L781.0 335.7 L780.0 336.5 L779.0 335.1 L778.0 334.9 L777.0 335.7 L776.0 335.1 L775.0 334.8 L774.0 334.9 L773.0 334.7 L772.0 335.0 L771.0 335.2 L770.0 335.2 L769.0 336.1 L768.0 335.2 L767.0 335.6 L766.0 335.0 L765.0 335.3 L764.0 334.6 L763.0 335.1 L762.0 334.6 L761.0 336.1 L760.0 335.7 L759.0 335.0 L758.0 335.5 L757.0 336.5 L756.0 334.8 L755.0 336.2 L754.0 335.5 L753.0 335.6 L752.0 336.3 L751.0 335.4 L750.0 335.6 L749.0 336.0 L748.0 336.6 L747.0 335.3 L746.0 336.3 L745.0 336.0 L744.0 335.9 L743.0 335.4 L742.0 335.3 L741.0 334.7 L740.0 334.9 L739.0 334.7 L738.0 336.1 L737.0 335.1 L736.0 334.9 L735.0 334.8 L734.0 336.3 L733.0 336.3 L732.0 335.9 L731.0 335.2 L730.0 335.1 L729.0 335.2 L728.0 335.5 L727.0 334.9 L726.0 335.5 L725.0 335.1 L724.0 336.5 L723.0 336.5 L722.0 335.7 L721.0 335.1 L720.0 336.5 L719.0 335.2 L718.0 335.3 L717.0 334.6 L716.0 335.4Z M1060.0 333.6 L1061.0 333.5 L1062.0 334.2 L1063.0 333.5 L1064.0 334.6 L1065.0 334.0 L1066.0 334.4 L1067.0 333.7 L1068.0 334.5 L1069.0 334.6 L1070.0 333.9 L1071.0 334.1 L1072.0 333.3 L1073.0 333.4 L1074.0 332.9 L1075.0 333.2 L1076.0 333.0 L1077.0 332.7 L1078.0 333.7 L1079.0 333.9 L1080.0 332.4 L1081.0 334.3 L1082.0 333.0 L1083.0 333.2 L1084.0 334.5 L1085.0 332.8 L1086.0 332.6 L1087.0 333.2 L1088.0 333.0 L1089.0 332.8 L1090.0 334.3 L1091.0 333.4 L1092.0 333.5 L1093.0 332.8 L1094.0 332.8 L1095.0 332.8 L1096.0 333.3 L1097.0 332.6 L1098.0 333.1 L1099.0 333.1 L1100.0 334.1 L1101.0 334.5 L1102.0 334.3 L1103.0 333.8 L1104.0 334.4 L1105.0 336.4 L1104.0 335.8 L1103.0 336.0 L1102.0 336.0 L1101.0 336.1 L1100.0 335.7 L1099.0 334.6 L1098.0 336.4 L1097.0 336.2 L1096.0 335.7 L1095.0 335.8 L1094.0 336.1 L1093.0 334.7 L1092.0 336.2 L1091.0 335.2 L1090.0 334.8 L1089.0 335.2 L1088.0 336.2 L1087.0 335.1 L1086.0 336.2 L1085.0 336.7 L1084.0 335.7 L1083.0 335.4 L1082.0 335.7 L1081.0 336.1 L1080.0 336.3 L1079.0 336.0 L1078.0 336.0 L1077.0 334.8 L1076.0 334.9 L1075.0 335.2 L1074.0 336.2 L1073.0 335.3 L1072.0 335.8 L1071.0 334.6 L1070.0 334.7 L1069.0 335.2 L1068.0 336.1 L1067.0 336.1 L1066.0 336.1 L1065.0 335.2 L1064.0 335.7 L1063.0 335.6 L1062.0 335.6 L1061.0 334.9Z" fill="#439b4c"/><path d="M621.4 333.6 L622.1 320.6 L622.8 311.2 L623.5 311.9 L624.2 311.0 L624.9 313.6 L625.6 321.8 L626.3 329.3 L627.0 330.4 L627.7 326.8 L628.4 323.2 L629.1 320.5 L629.8 316.2 L630.5 313.5 L631.2 309.3 L631.9 305.6 L632.6 299.8 L633.3 289.9 L634.0 285.0 L634.7 275.8 L635.4 270.1 L636.1 261.7 L636.8 251.3 L637.5 248.7 L638.2 244.3 L638.9 240.4 L639.6 239.9 L640.3 243.2 L641.0 243.1 L641.7 243.1 L642.4 243.0 L643.1 245.6 L643.8 246.5 L644.5 251.3 L645.2 246.4 L645.9 252.9 L646.6 255.2 L647.3 252.2 L648.0 259.2 L648.7 259.6 L649.4 262.5 L650.1 260.3 L650.8 262.1 L651.5 263.6 L652.2 268.4 L652.9 267.3 L653.6 267.4 L654.3 275.0 L655.0 278.8 L655.7 275.2 L656.4 272.9 L657.1 278.4 L657.8 278.5 L658.5 284.1 L659.2 283.1 L659.9 284.9 L660.6 287.6 L661.3 288.0 L662.0 287.3 L662.7 288.3 L663.4 286.7 L664.1 285.1 L664.8 283.0 L665.5 284.7 L666.2 286.8 L666.9 287.1 L667.6 289.7 L668.3 286.3 L669.0 287.7 L669.7 285.2 L670.4 285.1 L671.1 283.4 L671.8 283.8 L672.5 293.5 L673.2 306.3 L673.9 306.4 L674.6 308.8 L675.3 307.2 L676.0 305.7 L676.7 304.8 L677.4 306.7 L678.1 309.0 L678.8 313.0 L679.5 315.5 L680.2 312.1 L680.9 307.9 L681.6 304.2 L682.3 305.5 L683.0 307.4 L683.7 311.9 L684.4 314.1 L685.1 316.9 L685.8 321.8 L686.5 325.8 L687.2 325.2 L687.9 324.7 L688.6 324.6 L689.3 324.3 L690.0 324.3 L690.7 323.4 L691.4 322.8 L692.1 322.6 L692.8 325.1 L693.5 327.5 L694.2 327.7 L694.9 327.8 L695.6 328.1 L696.3 328.1 L697.0 327.5 L697.7 326.9 L698.4 327.1 L699.1 328.1 L699.8 329.3 L700.5 329.9 L701.2 330.8 L701.9 331.3 L702.6 331.9 L703.3 331.7 L704.0 330.8 L704.7 329.9 L705.4 329.1 L706.1 328.6 L706.8 329.7 L707.5 330.6 L708.2 331.3 L708.9 331.4 L709.6 331.7 L710.3 332.2 L711.0 332.5 L711.7 332.7 L712.4 333.0 L713.1 333.1 L713.8 333.3 L714.5 333.5 L715.2 333.6 L715.9 333.6 L716.6 333.7 L717.3 333.7 L718.0 333.7 L718.7 333.7 L719.4 333.8 L720.1 333.9 L720.8 333.9 L721.5 333.9 L722.2 334.0 L722.9 334.0 L722.9 335.0 L722.2 335.0 L721.5 335.0 L720.8 335.0 L720.1 335.1 L719.4 335.1 L718.7 335.1 L718.0 335.1 L717.3 335.1 L716.6 335.1 L715.9 335.1 L715.2 335.2 L714.5 335.2 L713.8 335.2 L713.1 335.2 L712.4 335.2 L711.7 335.3 L711.0 335.3 L710.3 337.7 L709.6 340.4 L708.9 342.8 L708.2 342.6 L707.5 341.7 L706.8 341.2 L706.1 340.5 L705.4 340.1 L704.7 339.6 L704.0 338.7 L703.3 337.8 L702.6 337.1 L701.9 336.5 L701.2 337.1 L700.5 337.5 L699.8 338.5 L699.1 340.8 L698.4 343.2 L697.7 345.1 L697.0 344.2 L696.3 342.9 L695.6 341.1 L694.9 339.0 L694.2 340.0 L693.5 344.9 L692.8 350.4 L692.1 348.9 L691.4 347.4 L690.7 346.0 L690.0 346.4 L689.3 346.5 L688.6 348.0 L687.9 347.3 L687.2 347.7 L686.5 347.4 L685.8 347.2 L685.1 349.8 L684.4 350.9 L683.7 353.6 L683.0 356.2 L682.3 358.4 L681.6 360.3 L680.9 362.0 L680.2 363.5 L679.5 366.4 L678.8 366.1 L678.1 366.9 L677.4 365.2 L676.7 369.5 L676.0 374.1 L675.3 378.5 L674.6 381.5 L673.9 383.2 L673.2 386.0 L672.5 389.3 L671.8 390.7 L671.1 393.7 L670.4 399.5 L669.7 401.4 L669.0 398.1 L668.3 399.8 L667.6 404.6 L666.9 401.8 L666.2 404.2 L665.5 405.0 L664.8 406.0 L664.1 407.8 L663.4 409.6 L662.7 408.7 L662.0 409.0 L661.3 406.1 L660.6 411.9 L659.9 407.3 L659.2 412.8 L658.5 412.5 L657.8 410.2 L657.1 410.8 L656.4 414.0 L655.7 417.2 L655.0 415.1 L654.3 416.4 L653.6 413.4 L652.9 419.0 L652.2 418.5 L651.5 415.5 L650.8 422.1 L650.1 419.9 L649.4 417.5 L648.7 418.3 L648.0 423.9 L647.3 424.4 L646.6 424.7 L645.9 418.9 L645.2 424.2 L644.5 421.1 L643.8 420.4 L643.1 425.0 L642.4 426.0 L641.7 421.3 L641.0 424.3 L640.3 427.4 L639.6 424.4 L638.9 424.1 L638.2 419.4 L637.5 416.3 L636.8 406.3 L636.1 398.5 L635.4 393.0 L634.7 384.6 L634.0 381.2 L633.3 373.0 L632.6 364.5 L631.9 355.9 L631.2 352.0 L630.5 350.1 L629.8 347.6 L629.1 344.7 L628.4 341.9 L627.7 339.0 L627.0 336.4 L626.3 338.1 L625.6 346.0 L624.9 351.1 L624.2 354.3 L623.5 357.9 L622.8 354.5 L622.1 345.3 L621.4 336.1Z M893.8 335.0 L894.5 315.9 L895.2 316.1 L895.9 316.9 L896.6 323.1 L897.3 318.4 L898.0 313.9 L898.7 310.9 L899.4 308.9 L900.1 308.8 L900.8 307.0 L901.5 305.8 L902.2 302.5 L902.9 300.6 L903.6 299.2 L904.3 299.0 L905.0 298.3 L905.7 296.1 L906.4 294.1 L907.1 293.8 L907.8 293.7 L908.5 293.1 L909.2 292.6 L909.9 292.2 L910.6 291.9 L911.3 290.6 L912.0 293.8 L912.7 292.5 L913.4 294.0 L914.1 294.0 L914.8 295.9 L915.5 294.8 L916.2 295.7 L916.9 296.1 L917.6 295.4 L918.3 297.4 L919.0 296.1 L919.7 295.0 L920.4 294.9 L921.1 296.5 L921.8 293.6 L922.5 291.1 L923.2 291.5 L923.9 289.4 L924.6 289.1 L925.3 284.0 L926.0 283.9 L926.7 283.8 L927.4 282.4 L928.1 281.5 L928.8 276.0 L929.5 275.8 L930.2 273.6 L930.9 272.5 L931.6 275.2 L932.3 271.8 L933.0 272.7 L933.7 269.0 L934.4 271.1 L935.1 268.1 L935.8 266.4 L936.5 268.7 L937.2 269.0 L937.9 264.3 L938.6 267.2 L939.3 267.5 L940.0 265.4 L940.7 266.4 L941.4 265.2 L942.1 265.7 L942.8 266.1 L943.5 269.0 L944.2 270.1 L944.9 268.6 L945.6 268.5 L946.3 271.4 L947.0 276.1 L947.7 276.7 L948.4 280.2 L949.1 282.7 L949.8 288.1 L950.5 290.2 L951.2 291.7 L951.9 295.1 L952.6 299.2 L953.3 303.3 L954.0 307.7 L954.7 310.9 L955.4 314.8 L956.1 315.4 L956.8 314.6 L957.5 314.0 L958.2 313.6 L958.9 314.2 L959.6 312.5 L960.3 312.4 L961.0 311.5 L961.7 312.8 L962.4 314.8 L963.1 316.2 L963.8 316.4 L964.5 317.4 L965.2 319.9 L965.9 321.0 L966.6 322.6 L967.3 322.6 L968.0 321.2 L968.7 320.7 L969.4 319.3 L970.1 318.9 L970.8 316.7 L971.5 314.6 L972.2 312.6 L972.9 311.9 L973.6 310.5 L974.3 309.4 L975.0 304.5 L975.7 301.8 L976.4 297.0 L977.1 293.4 L977.8 288.0 L978.5 285.4 L979.2 283.7 L979.9 282.8 L980.6 276.4 L981.3 275.5 L982.0 275.9 L982.7 275.9 L983.4 271.0 L984.1 269.7 L984.8 273.1 L985.5 273.1 L986.2 270.2 L986.9 267.7 L987.6 272.2 L988.3 269.1 L989.0 271.6 L989.7 269.9 L990.4 270.8 L991.1 266.9 L991.8 270.2 L992.5 267.3 L993.2 268.4 L993.9 270.9 L994.6 270.9 L995.3 267.5 L996.0 267.8 L996.7 268.9 L997.4 269.6 L998.1 269.0 L998.8 267.7 L999.5 268.5 L1000.2 271.3 L1000.9 272.3 L1001.6 267.8 L1002.3 270.8 L1003.0 271.9 L1003.7 268.2 L1004.4 272.2 L1005.1 267.7 L1005.8 269.6 L1006.5 268.7 L1007.2 268.5 L1007.9 266.0 L1008.6 266.0 L1009.3 268.2 L1010.0 268.7 L1010.7 271.3 L1011.4 271.5 L1012.1 272.8 L1012.8 272.1 L1013.5 276.4 L1014.2 277.1 L1014.9 276.5 L1015.6 279.5 L1016.3 280.0 L1017.0 278.9 L1017.7 278.1 L1018.4 279.9 L1019.1 278.7 L1019.8 279.3 L1020.5 281.1 L1021.2 280.0 L1021.9 281.7 L1022.6 282.2 L1023.3 280.4 L1024.0 283.2 L1024.7 281.0 L1025.4 284.1 L1026.1 284.5 L1026.8 283.5 L1027.5 281.8 L1028.2 283.0 L1028.9 280.3 L1029.6 280.9 L1030.3 276.1 L1031.0 280.9 L1031.7 283.0 L1032.4 283.2 L1033.1 285.0 L1033.8 283.9 L1034.5 288.6 L1035.2 288.9 L1035.9 293.1 L1036.6 295.4 L1037.3 295.5 L1038.0 300.0 L1038.7 302.9 L1039.4 302.4 L1040.1 303.3 L1040.8 304.5 L1041.5 303.2 L1042.2 305.2 L1042.9 303.8 L1043.6 305.3 L1044.3 304.7 L1045.0 306.7 L1045.7 308.8 L1046.4 308.4 L1047.1 309.7 L1047.8 311.3 L1048.5 312.1 L1049.2 312.6 L1049.9 313.9 L1050.6 314.9 L1051.3 317.1 L1052.0 317.8 L1052.7 319.0 L1053.4 319.6 L1054.1 321.8 L1054.8 322.6 L1055.5 324.6 L1056.2 326.2 L1056.9 327.5 L1057.6 328.8 L1058.3 329.0 L1059.0 329.3 L1059.7 329.8 L1060.4 329.8 L1061.1 330.5 L1061.8 330.7 L1062.5 330.9 L1063.2 331.4 L1063.9 331.6 L1064.6 332.0 L1065.3 332.0 L1066.0 332.2 L1066.7 332.4 L1067.4 332.5 L1068.1 332.7 L1068.8 332.9 L1069.5 333.0 L1070.2 333.3 L1070.9 333.4 L1071.6 333.6 L1072.3 333.8 L1073.0 333.9 L1073.7 334.1 L1074.4 334.3 L1074.4 335.8 L1073.7 335.9 L1073.0 336.1 L1072.3 336.1 L1071.6 336.3 L1070.9 336.4 L1070.2 336.5 L1069.5 336.7 L1068.8 336.8 L1068.1 336.9 L1067.4 337.1 L1066.7 337.2 L1066.0 337.3 L1065.3 337.6 L1064.6 337.7 L1063.9 338.0 L1063.2 338.1 L1062.5 338.3 L1061.8 338.6 L1061.1 338.6 L1060.4 338.9 L1059.7 339.2 L1059.0 339.1 L1058.3 339.9 L1057.6 341.5 L1056.9 343.1 L1056.2 344.2 L1055.5 345.4 L1054.8 347.0 L1054.1 348.9 L1053.4 350.5 L1052.7 352.2 L1052.0 352.7 L1051.3 354.1 L1050.6 355.8 L1049.9 356.7 L1049.2 358.4 L1048.5 358.7 L1047.8 360.2 L1047.1 362.1 L1046.4 361.5 L1045.7 364.5 L1045.0 364.2 L1044.3 365.4 L1043.6 366.8 L1042.9 368.2 L1042.2 367.1 L1041.5 370.2 L1040.8 369.3 L1040.1 368.8 L1039.4 371.9 L1038.7 372.4 L1038.0 371.8 L1037.3 372.8 L1036.6 373.0 L1035.9 373.1 L1035.2 375.9 L1034.5 377.2 L1033.8 381.6 L1033.1 387.1 L1032.4 387.7 L1031.7 392.4 L1031.0 396.9 L1030.3 405.2 L1029.6 400.5 L1028.9 399.4 L1028.2 399.2 L1027.5 396.0 L1026.8 395.8 L1026.1 395.3 L1025.4 394.4 L1024.7 393.1 L1024.0 393.4 L1023.3 391.3 L1022.6 388.7 L1021.9 388.3 L1021.2 387.0 L1020.5 388.7 L1019.8 392.6 L1019.1 393.0 L1018.4 395.4 L1017.7 395.4 L1017.0 398.6 L1016.3 401.8 L1015.6 401.6 L1014.9 401.5 L1014.2 407.6 L1013.5 405.3 L1012.8 412.2 L1012.1 412.3 L1011.4 414.1 L1010.7 412.4 L1010.0 412.6 L1009.3 415.5 L1008.6 420.0 L1007.9 415.6 L1007.2 418.8 L1006.5 418.9 L1005.8 413.7 L1005.1 415.1 L1004.4 414.1 L1003.7 413.7 L1003.0 411.0 L1002.3 413.9 L1001.6 410.9 L1000.9 411.2 L1000.2 409.6 L999.5 411.6 L998.8 409.1 L998.1 409.4 L997.4 410.4 L996.7 410.3 L996.0 407.1 L995.3 409.7 L994.6 404.0 L993.9 407.9 L993.2 407.9 L992.5 406.8 L991.8 401.3 L991.1 404.2 L990.4 404.8 L989.7 404.9 L989.0 404.3 L988.3 400.2 L987.6 400.0 L986.9 399.2 L986.2 398.5 L985.5 401.6 L984.8 398.3 L984.1 399.0 L983.4 396.1 L982.7 395.6 L982.0 393.2 L981.3 394.5 L980.6 388.0 L979.9 385.2 L979.2 382.4 L978.5 383.1 L977.8 380.1 L977.1 378.2 L976.4 376.3 L975.7 371.5 L975.0 369.5 L974.3 368.0 L973.6 365.4 L972.9 363.8 L972.2 362.3 L971.5 360.0 L970.8 357.2 L970.1 353.4 L969.4 351.5 L968.7 349.8 L968.0 351.0 L967.3 353.0 L966.6 354.0 L965.9 355.3 L965.2 355.9 L964.5 357.9 L963.8 357.4 L963.1 355.3 L962.4 355.3 L961.7 353.8 L961.0 353.3 L960.3 353.3 L959.6 351.9 L958.9 350.9 L958.2 349.6 L957.5 350.0 L956.8 353.4 L956.1 357.6 L955.4 362.3 L954.7 364.7 L954.0 370.8 L953.3 372.6 L952.6 379.3 L951.9 384.9 L951.2 389.1 L950.5 389.2 L949.8 388.0 L949.1 392.3 L948.4 389.8 L947.7 389.6 L947.0 388.0 L946.3 390.5 L945.6 388.9 L944.9 389.3 L944.2 386.9 L943.5 389.6 L942.8 386.8 L942.1 390.0 L941.4 390.6 L940.7 388.6 L940.0 389.8 L939.3 391.8 L938.6 389.7 L937.9 392.5 L937.2 389.5 L936.5 390.1 L935.8 389.9 L935.1 390.9 L934.4 392.2 L933.7 391.9 L933.0 391.8 L932.3 389.4 L931.6 393.1 L930.9 389.2 L930.2 393.1 L929.5 392.2 L928.8 391.8 L928.1 388.7 L927.4 389.7 L926.7 389.5 L926.0 386.4 L925.3 388.5 L924.6 386.7 L923.9 385.6 L923.2 383.8 L922.5 383.0 L921.8 382.7 L921.1 383.1 L920.4 382.4 L919.7 382.2 L919.0 378.8 L918.3 378.7 L917.6 377.6 L916.9 378.9 L916.2 378.5 L915.5 378.3 L914.8 380.1 L914.1 382.9 L913.4 382.7 L912.7 382.0 L912.0 385.7 L911.3 387.0 L910.6 386.4 L909.9 383.7 L909.2 382.1 L908.5 383.9 L907.8 382.9 L907.1 381.5 L906.4 380.0 L905.7 377.2 L905.0 376.4 L904.3 373.8 L903.6 372.2 L902.9 367.8 L902.2 366.5 L901.5 365.6 L900.8 360.9 L900.1 360.1 L899.4 356.8 L898.7 353.1 L898.0 351.2 L897.3 349.0 L896.6 347.1 L895.9 345.0 L895.2 348.0 L894.5 352.1 L893.8 336.0Z" fill="#439b4c" stroke="#439b4c" stroke-width="0.6"/><line x1="396" y1="251.7" x2="1198" y2="251.7" stroke="#000" stroke-opacity=".165" stroke-width="1"/><line x1="396" y1="293.9" x2="1198" y2="293.9" stroke="#000" stroke-opacity=".165" stroke-width="1"/><line x1="396" y1="334.6" x2="1198" y2="334.6" stroke="#000" stroke-opacity=".165" stroke-width="1"/><line x1="396" y1="376.3" x2="1198" y2="376.3" stroke="#000" stroke-opacity=".165" stroke-width="1"/><line x1="396" y1="418.6" x2="1198" y2="418.6" stroke="#000" stroke-opacity=".165" stroke-width="1"/><line x1="432.5" y1="230.5" x2="432.5" y2="442" stroke="#000" stroke-opacity=".165" stroke-width="1"/><line x1="781" y1="230.5" x2="781" y2="442" stroke="#000" stroke-opacity=".165" stroke-width="1"/><line x1="1130" y1="230.5" x2="1130" y2="442" stroke="#000" stroke-opacity=".165" stroke-width="1"/><rect x="396" y="230.5" width="802" height="211.5" fill="none" stroke="#5a5a5a" stroke-width="1.3"/><line x1="392.5" y1="251.7" x2="396" y2="251.7" stroke="#333" stroke-width="1"/><text x="388.8" y="256.3" text-anchor="end" font-family="Liberation Sans" font-size="10" fill="#262626">0.4</text><line x1="392.5" y1="293.9" x2="396" y2="293.9" stroke="#333" stroke-width="1"/><text x="388.8" y="298.5" text-anchor="end" font-family="Liberation Sans" font-size="10" fill="#262626">0.2</text><line x1="392.5" y1="334.6" x2="396" y2="334.6" stroke="#333" stroke-width="1"/><text x="388.8" y="339.20000000000005" text-anchor="end" font-family="Liberation Sans" font-size="10" fill="#262626">0.0</text><line x1="392.5" y1="376.3" x2="396" y2="376.3" stroke="#333" stroke-width="1"/><text x="388.8" y="380.90000000000003" text-anchor="end" font-family="Liberation Sans" font-size="10" fill="#262626">−0.2</text><line x1="392.5" y1="418.6" x2="396" y2="418.6" stroke="#333" stroke-width="1"/><text x="388.8" y="423.20000000000005" text-anchor="end" font-family="Liberation Sans" font-size="10" fill="#262626">−0.4</text><line x1="432.5" y1="442" x2="432.5" y2="445.5" stroke="#333" stroke-width="1"/><text x="432.5" y="456.6" text-anchor="middle" font-family="Liberation Sans" font-size="10" fill="#262626">0.0</text><line x1="781" y1="442" x2="781" y2="445.5" stroke="#333" stroke-width="1"/><text x="781" y="456.6" text-anchor="middle" font-family="Liberation Sans" font-size="10" fill="#262626">1.0</text><line x1="1130" y1="442" x2="1130" y2="445.5" stroke="#333" stroke-width="1"/><text x="1130" y="456.6" text-anchor="middle" font-family="Liberation Sans" font-size="10" fill="#262626">2.0</text><text x="797" y="470.3" text-anchor="middle" font-family="Liberation Sans" font-size="10.5" fill="#262626">Time in seconds</text><text x="796.5" y="224.8" text-anchor="middle" font-family="Liberation Sans" font-size="12.5" fill="#262626">Sample audio</text><text x="0" y="0" transform="translate(359.4 337) rotate(-90)" text-anchor="middle" font-family="Liberation Sans" font-size="10.5" fill="#262626">Amplitude</text></svg>
<div class="abs" style="left:345px;top:488px;width:859px;height:93px;background:#f6f6f6;border:1px solid #e3e3e3"></div>
<div class="abs" style="left:351px;top:492px;width:851px;height:71px;background:#d9d9d9"></div>
<div class="abs" style="left:351px;top:563px;width:45px;height:12px;background:#d9d9d9"></div>
<div class="abs" style="left:318px;top:492px;line-height:14px;font-family:'Liberation Mono',monospace;font-size:9.36px;color:#2b2b2b;white-space:pre;-webkit-text-stroke:0.15px currentColor;color:#a0a0a0;-webkit-text-stroke:0">[9]:</div>
<div class="abs" style="left:351px;top:493px;line-height:14.2px;font-family:'Liberation Mono',monospace;font-size:9.36px;color:#2b2b2b;white-space:pre;-webkit-text-stroke:0.15px currentColor">Audio(trim_audio,rate<span style="color:#a03cdc">=</span>sampl_freq)
<span style="color:#408080;font-style:italic"># Creating input feature - time series:</span>
X<span style="color:#a03cdc">=</span>torch.<span style="color:#3a6bb0">arange</span>(<span style="color:#2a8f2a">0</span>,len(trim_audio))
y<span style="color:#a03cdc">=</span>trim_audio
print(X.<span style="color:#3a6bb0">shape</span>)
print(X)</div>
<div class="abs" style="left:351px;top:586px;line-height:12.7px;font-family:'Liberation Mono',monospace;font-size:9.36px;color:#2b2b2b;white-space:pre;-webkit-text-stroke:0.15px currentColor">torch.Size([33440])
tensor([    0,     1,     2,  ..., 33437, 33438, 33439])</div>
<div class="abs" style="left:345px;top:619px;width:859px;height:35px;background:#f6f6f6;border:1px solid #e3e3e3"></div>
<div class="abs" style="left:351px;top:623.2px;width:851px;height:13.299999999999955px;background:#d9d9d9"></div>
<div class="abs" style="left:351px;top:636.5px;width:78px;height:13.5px;background:#d9d9d9"></div>
<div class="abs" style="left:313px;top:623px;line-height:14px;font-family:'Liberation Mono',monospace;font-size:9.36px;color:#2b2b2b;white-space:pre;-webkit-text-stroke:0.15px currentColor;color:#a0a0a0;-webkit-text-stroke:0">[10]:</div>
<div class="abs" style="left:351px;top:623px;line-height:14.7px;font-family:'Liberation Mono',monospace;font-size:9.36px;color:#2b2b2b;white-space:pre;-webkit-text-stroke:0.15px currentColor">X<span style="color:#a03cdc">=</span>X.<span style="color:#3a6bb0">unsqueeze</span>(<span style="color:#2a8f2a">1</span>).<span style="color:#3a6bb0">float</span>()
print(X.<span style="color:#3a6bb0">shape</span>)</div>
<div class="abs" style="left:351px;top:661.2px;line-height:12.7px;font-family:'Liberation Mono',monospace;font-size:9.36px;color:#2b2b2b;white-space:pre;-webkit-text-stroke:0.15px currentColor">torch.Size([33440, 1])</div>
<div class="abs" style="left:345px;top:682px;width:859px;height:23px;background:#f6f6f6;border:1px solid #e3e3e3"></div>
<div class="abs" style="left:350.6px;top:687.2px;width:38.799999999999955px;height:11.599999999999909px;background:#d9d9d9"></div>
<div class="abs" style="left:313px;top:686.5px;line-height:14px;font-family:'Liberation Mono',monospace;font-size:9.36px;color:#2b2b2b;white-space:pre;-webkit-text-stroke:0.15px currentColor;color:#a0a0a0;-webkit-text-stroke:0">[11]:</div>
<div class="abs" style="left:351px;top:686.5px;line-height:14.2px;font-family:'Liberation Mono',monospace;font-size:9.36px;color:#2b2b2b;white-space:pre;-webkit-text-stroke:0.15px currentColor">X<span style='color:#a8a8a0'>[</span><span style="color:#a03cdc">-</span><span style="color:#2a8f2a">20</span>:<span style='color:#a8a8a0'>]</span></div>
<div class="abs" style="left:313px;top:714px;line-height:14px;font-family:'Liberation Mono',monospace;font-size:9.36px;color:#2b2b2b;white-space:pre;-webkit-text-stroke:0.15px currentColor;color:#a0a0a0;-webkit-text-stroke:0">[11]:</div>
<div class="abs" style="left:351px;top:714.5px;line-height:13.15px;font-family:'Liberation Mono',monospace;font-size:9.36px;color:#2b2b2b;white-space:pre;-webkit-text-stroke:0.15px currentColor">tensor([[33420.],
        [33421.],
        [33422.],
        [33423.],
        [33424.],
        [33425.],
        [33426.],</div>
<svg style="left:368.7px;top:309.5px" width="11" height="17" viewBox="0 0 11 17"><path d="M0.600 0.600V14.200L3.700 11.300L5.800 15.800L7.900 14.800L5.900 10.500H10.100Z" fill="#fff" stroke="#3a3a46" stroke-width="1.05" stroke-linejoin="round"/></svg>
<svg style="left:502.7px;top:459.2px" width="11" height="17" viewBox="0 0 11 17"><path d="M0.600 0.600V14.200L3.700 11.300L5.800 15.800L7.900 14.800L5.900 10.500H10.100Z" fill="#fff" stroke="#3a3a46" stroke-width="1.05" stroke-linejoin="round"/></svg>
</div></div>
<div class="abs" style="left:0;top:792px;width:1500px;height:1px;background:#c6d5d1"></div><div class="abs" style="left:0;top:793px;width:1500px;height:1px;background:#c3e4dc"></div>
</body></html>
